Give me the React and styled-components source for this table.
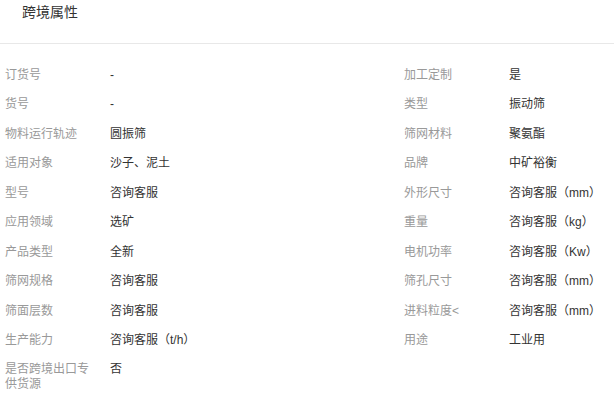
import React from "react";
import styled, { createGlobalStyle } from "styled-components";

const GlobalStyle = createGlobalStyle`
  html, body {
    margin: 0;
    padding: 0;
    background: #ffffff;
  }
  body {
    font-family: "Liberation Sans", "Noto Sans CJK SC", Arial, sans-serif;
  }
`;

const Panel = styled.section`
  width: 614px;
  background: #fff;
`;

const Header = styled.div`
  height: 43px;
  border-bottom: 1px solid #e8e8e8;
  box-sizing: content-box;
  padding: 0 22px;
`;

const Title = styled.h3`
  margin: 0;
  padding-top: 4px;
  font-size: 14px;
  line-height: 16px;
  font-weight: normal;
  color: #333;
`;

const Grid = styled.dl`
  margin: 0;
  padding: 24px 0 0 5px;
  display: grid;
  grid-template-columns: 399px 1fr;
  row-gap: 14.44px;
`;

const Item = styled.div`
  display: flex;
  align-items: flex-start;
  font-size: 12px;
  line-height: 15px;
`;

const Label = styled.dt`
  flex: 0 0 105px;
  box-sizing: border-box;
  padding-right: 15px;
  margin: 0;
  color: #999;
`;

const Value = styled.dd`
  margin: 0;
  color: #333;
`;

const rows = [
  [["订货号", "-"], ["加工定制", "是"]],
  [["货号", "-"], ["类型", "振动筛"]],
  [["物料运行轨迹", "圆振筛"], ["筛网材料", "聚氨酯"]],
  [["适用对象", "沙子、泥土"], ["品牌", "中矿裕衡"]],
  [["型号", "咨询客服"], ["外形尺寸", "咨询客服（mm）"]],
  [["应用领域", "选矿"], ["重量", "咨询客服（kg）"]],
  [["产品类型", "全新"], ["电机功率", "咨询客服（Kw）"]],
  [["筛网规格", "咨询客服"], ["筛孔尺寸", "咨询客服（mm）"]],
  [["筛面层数", "咨询客服"], ["进料粒度<", "咨询客服（mm）"]],
  [["生产能力", "咨询客服（t/h）"], ["用途", "工业用"]],
  [["是否跨境出口专供货源", "否"], null],
];

export default function App() {
  return (
    <>
      <GlobalStyle />
      <Panel>
        <Header>
          <Title>跨境属性</Title>
        </Header>
        <Grid>
          {rows.flatMap((pair, i) =>
            pair.map((cell, j) =>
              cell ? (
                <Item key={`${i}-${j}`}>
                  <Label>{cell[0]}</Label>
                  <Value>{cell[1]}</Value>
                </Item>
              ) : (
                <div key={`${i}-${j}`} />
              )
            )
          )}
        </Grid>
      </Panel>
    </>
  );
}
